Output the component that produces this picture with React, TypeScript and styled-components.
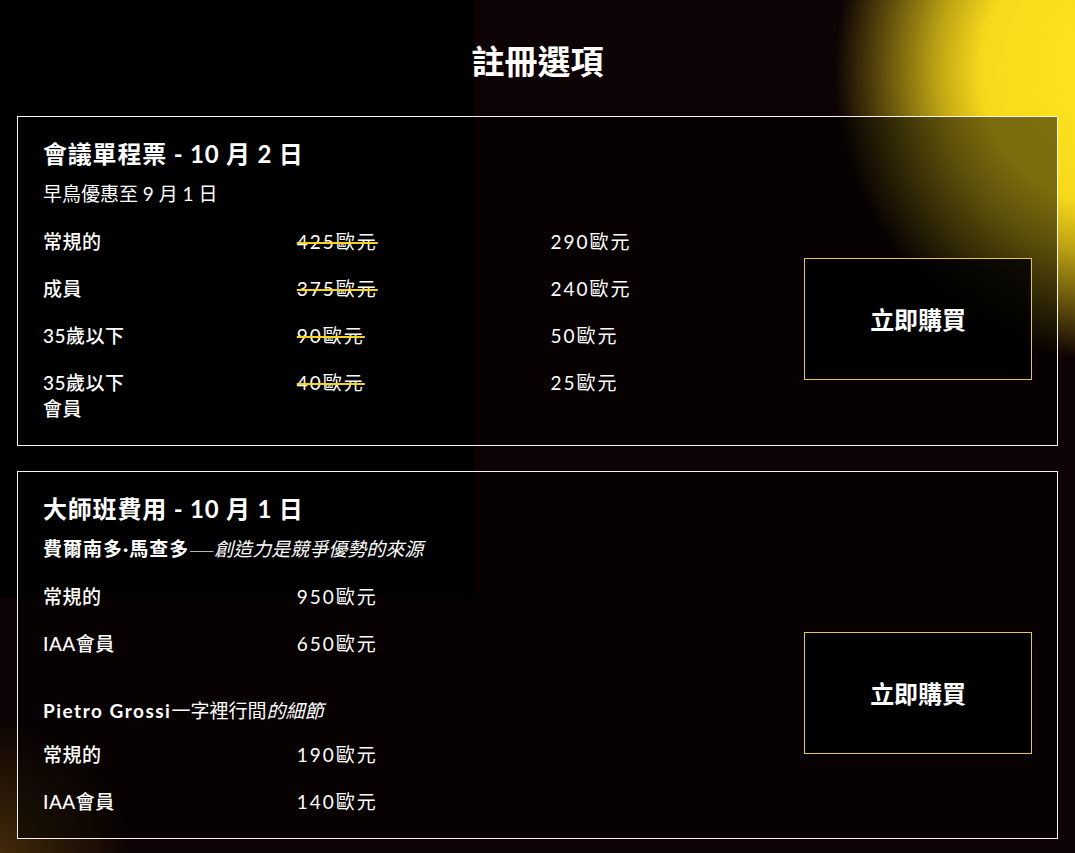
import React from "react";
import styled, { createGlobalStyle } from "styled-components";

const GlobalStyle = createGlobalStyle`
  html, body { margin: 0; padding: 0; }
  body {
    background: #0e0304;
    color: #ffffff;
    font-family: "Lato", "Noto Sans CJK TC", "Noto Sans", sans-serif;
  }
`;

const Page = styled.main`
  min-height: 853px;
  box-sizing: border-box;
  padding: 40px 17px 16px;
  background:
    linear-gradient(#000000, #000000) 0 0 / 474px 598px no-repeat,
    radial-gradient(ellipse 270px 290px at 1105px 70px, #ffe620 0%, #f7d91b 46%, rgba(235, 205, 25, 0.8) 62%, rgba(200, 170, 20, 0) 100%) no-repeat,
    radial-gradient(circle 130px at 0 853px, rgba(115, 80, 12, 0.5), rgba(115, 80, 12, 0) 100%) no-repeat,
    #0e0304;
`;

const Heading = styled.h1`
  margin: 0 0 36px;
  text-align: center;
  font-family: "Noto Sans CJK TC", sans-serif;
  font-size: 33px;
  line-height: 40px;
  font-weight: 700;
`;

const Card = styled.section`
  border: 1px solid #f3f3f3;
  background: rgba(0, 0, 0, 0.5);
  padding: 21px 25px 23px;
  & + & {
    margin-top: 25px;
  }
`;

const CardTitle = styled.h2`
  margin: 0;
  font-family: "Lato", "Noto Sans CJK TC", sans-serif;
  font-size: 24px;
  line-height: 31px;
  font-weight: 700;
  letter-spacing: 0.8px;
`;

const Note = styled.p`
  margin: 12px 0 0;
  font-size: 19px;
  line-height: 26px;
  font-weight: 400;
`;

const Strong = styled.strong<{ $spacing?: number }>`
  font-weight: 700;
  letter-spacing: ${(p) => p.$spacing ?? 0}px;
`;

const Dash = styled.span`
  font-family: "Noto Sans CJK TC", sans-serif;
  font-size: 15px;
  line-height: 0;
  font-weight: 300;
  color: #d8d8d8;
`;

const Em = styled.em`
  font-style: italic;
  font-weight: 400;
`;

const Body = styled.div<{ $top: number }>`
  margin-top: ${(p) => p.$top}px;
  display: grid;
  grid-template-columns: repeat(4, 1fr);
  column-gap: 26px;
  align-items: center;
`;

const Column = styled.div`
  grid-column: span 3;
`;

const PriceTable = styled.div`
  display: grid;
  grid-template-columns: repeat(3, 1fr);
  column-gap: 26px;
  row-gap: 21px;
  font-size: 19px;
  line-height: 26px;
`;

const Label = styled.span`
  font-weight: 500;
  letter-spacing: 0.5px;
`;

const Price = styled.span<{ $old?: boolean }>`
  font-weight: 400;
  letter-spacing: 2px;
  text-decoration: ${(p) => (p.$old ? "line-through" : "none")};
  text-decoration-color: #f6d41c;
  text-decoration-thickness: 2px;
`;

const SubHeading = styled.p`
  margin: 41px 0 18px;
  font-size: 19px;
  line-height: 26px;
  font-weight: 400;
`;

const BuyButton = styled.button`
  grid-column: 4;
  height: 122px;
  margin-bottom: 14px;
  box-sizing: border-box;
  border: 1px solid #e8c64e;
  background: rgba(0, 0, 0, 0.82);
  color: #ffffff;
  font-family: "Noto Sans CJK TC", sans-serif;
  font-size: 24px;
  font-weight: 700;
  cursor: pointer;
`;

type Row = { label: React.ReactNode; old?: string; price: string };

const earlyBird: Row[] = [
  { label: "常規的", old: "425歐元", price: "290歐元" },
  { label: "成員", old: "375歐元", price: "240歐元" },
  { label: "35歲以下", old: "90歐元", price: "50歐元" },
  {
    label: (
      <>
        35歲以下
        <br />
        會員
      </>
    ),
    old: "40歐元",
    price: "25歐元",
  },
];

const machado: Row[] = [
  { label: "常規的", price: "950歐元" },
  { label: "IAA會員", price: "650歐元" },
];

const grossi: Row[] = [
  { label: "常規的", price: "190歐元" },
  { label: "IAA會員", price: "140歐元" },
];

function Prices({ rows }: { rows: Row[] }) {
  return (
    <PriceTable>
      {rows.map((r, i) => (
        <React.Fragment key={i}>
          <Label>{r.label}</Label>
          {r.old ? (
            <>
              <Price $old>{r.old}</Price>
              <Price>{r.price}</Price>
            </>
          ) : (
            <>
              <Price>{r.price}</Price>
              <span />
            </>
          )}
        </React.Fragment>
      ))}
    </PriceTable>
  );
}

export default function App() {
  return (
    <>
      <GlobalStyle />
      <Page>
        <Heading>註冊選項</Heading>
        <Card>
          <CardTitle>會議單程票 - 10 月 2 日</CardTitle>
          <Note>早鳥優惠至 9 月 1 日</Note>
          <Body $top={22}>
            <Column>
              <Prices rows={earlyBird} />
            </Column>
            <BuyButton>立即購買</BuyButton>
          </Body>
        </Card>
        <Card>
          <CardTitle>大師班費用 - 10 月 1 日</CardTitle>
          <Note>
            <Strong $spacing={1}>費爾南多·馬查多</Strong>
            <Dash>——</Dash>
            <Em>創造力是競爭優勢的來源</Em>
          </Note>
          <Body $top={22}>
            <Column>
              <Prices rows={machado} />
              <SubHeading>
                <Strong $spacing={1.5}>Pietro Grossi</Strong>一字裡行間<Em>的細節</Em>
              </SubHeading>
              <Prices rows={grossi} />
            </Column>
            <BuyButton>立即購買</BuyButton>
          </Body>
        </Card>
      </Page>
    </>
  );
}
